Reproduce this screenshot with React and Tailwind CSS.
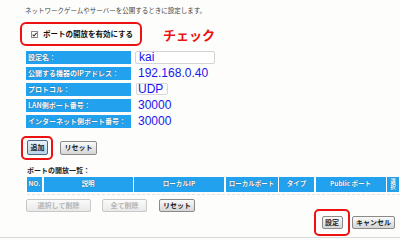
import React from "react";

const jp = "font-['Noto_Sans_CJK_JP','Noto_Sans',sans-serif]";
const num = "font-['Liberation_Sans','Noto_Sans_CJK_JP',sans-serif]";

const rows = [
  { label: "設定名：", value: "kai", kind: "input" },
  { label: "公開する機器のIPアドレス：", value: "192.168.0.40", kind: "text" },
  { label: "プロトコル：", value: "UDP", kind: "select" },
  { label: "LAN側ポート番号：", value: "30000", kind: "text" },
  { label: "インターネット側ポート番号：", value: "30000", kind: "text" },
];

const Btn = ({ children, className = "", disabled = false, active = false }) => (
  <button
    className={`h-[13px] flex items-center justify-center rounded-[2px] border text-[7px] font-bold leading-none ${jp} ${
      disabled
        ? "border-[#c8c8c8] bg-gradient-to-b from-[#fbfbfb] to-[#e9e9e9] text-[#b5b5b5]"
        : active
        ? "border-[#4a6a88] bg-gradient-to-b from-[#e8f2fb] to-[#b9d2e6] text-[#222]"
        : "border-[#8a8a8a] bg-gradient-to-b from-[#fafafa] to-[#d6d6d6] text-[#222]"
    } ${className}`}
  >
    {children}
  </button>
);

export default function App() {
  return (
    <div className={`w-[400px] h-[240px] bg-[#fdfdfb] overflow-hidden flex flex-col ${jp}`}>
      {/* intro */}
      <p className="ml-[25px] mt-[6px] text-[6.5px] leading-[8px] text-[#444]">
        ネットワークゲームやサーバーを公開するときに設定します。
      </p>

      {/* enable checkbox */}
      <div className="flex items-center mt-[8px]">
        <div className="ml-[20px] w-[122px] h-[24px] border-2 border-[#ee1111] rounded-[6px] flex items-center pl-[9px]">
          <svg width="7" height="7" viewBox="0 0 7 7" className="shrink-0">
            <rect x="0.5" y="0.5" width="6" height="6" fill="#fff" stroke="#8a8a8a" />
            <path d="M1.6 3.6 L3 5 L5.6 1.8" fill="none" stroke="#333" strokeWidth="1.1" />
          </svg>
          <span className="ml-[5px] text-[7.5px] font-bold text-[#111] whitespace-nowrap">
            ポートの開放を有効にする
          </span>
        </div>
        <span className="ml-[21px] text-[13px] font-bold text-[#ee1111] leading-none">チェック</span>
      </div>

      {/* settings rows */}
      <div className="ml-[26px] mt-[5px] flex flex-col gap-[3.5px]">
        {rows.map((r) => (
          <div key={r.label} className="flex items-center h-[12.5px]">
            <div className="w-[105px] h-[12.5px] bg-[#22a2ee] flex items-center pl-[2px] text-[7px] font-bold text-white whitespace-nowrap [text-shadow:0_0_1px_#1a3a5a]">
              {r.label}
            </div>
            {r.kind === "input" && (
              <div className="ml-[4px] w-[80px] h-[13px] border border-[#d4d4d4] rounded-[2px] bg-white flex items-center pl-[3px]">
                <span className={`${num} text-[12px] leading-none text-[#1616f0]`}>{r.value}</span>
              </div>
            )}
            {r.kind === "text" && (
              <span className={`ml-[7px] ${num} text-[12px] leading-none text-[#1616f0]`}>{r.value}</span>
            )}
            {r.kind === "select" && (
              <div className="ml-[5px] w-[32px] h-[12px] border border-[#d8d8d8] rounded-[2px] flex items-center pl-[1px]">
                <span className={`${num} text-[12px] leading-none text-[#1616f0]`}>{r.value}</span>
                <svg width="5" height="3" viewBox="0 0 5 3" className="ml-[3px]">
                  <path d="M0 0 H5 L2.5 3 Z" fill="#222" />
                </svg>
              </div>
            )}
          </div>
        ))}
      </div>

      {/* add / reset */}
      <div className="flex items-center mt-[8px]">
        <div className="ml-[21px] w-[32px] h-[24px] border-2 border-[#ee1111] rounded-[5px] flex items-center pl-[4px]">
          <Btn active className="w-[21px] h-[15px]">追加</Btn>
        </div>
        <Btn className="ml-[7px] w-[37px] h-[14px]">リセット</Btn>
      </div>

      <p className="ml-[27px] mt-[5px] text-[7px] font-bold text-[#222] leading-[10px]">ポートの開放一覧：</p>

      {/* table header */}
      <div className="ml-[27px] mt-[2px] flex h-[15px] gap-[1.5px] text-[6.5px] font-bold text-white [text-shadow:0_0_1px_#1a3a5a]">
        <div className="w-[15px] bg-[#22a2ee] flex items-center justify-center">NO.</div>
        <div className="w-[89px] bg-[#22a2ee] flex items-center justify-center">説明</div>
        <div className="w-[90px] bg-[#22a2ee] flex items-center justify-center">ローカルIP</div>
        <div className="w-[52px] bg-[#22a2ee] flex items-center justify-center">ローカルポート</div>
        <div className="w-[35px] bg-[#22a2ee] flex items-center justify-center">タイプ</div>
        <div className="w-[70px] bg-[#22a2ee] flex items-center justify-center">Public ポート</div>
        <div className="w-[12px] bg-[#22a2ee] flex items-center justify-center">
          <span className="w-[6px] text-[5.5px] leading-[6.5px] break-all text-center">選択</span>
        </div>
      </div>
      <div className="ml-[27px] h-[2px] mt-[1px] border-b border-dashed border-[#e4e4e4]" />

      {/* delete buttons */}
      <div className="flex items-center mt-[4px]">
        <Btn disabled className="ml-[26px] w-[65px]">選択して削除</Btn>
        <Btn disabled className="ml-[11px] w-[45px]">全て削除</Btn>
        <Btn className="ml-[12px] w-[36px]">リセット</Btn>
      </div>

      {/* submit */}
      <div className="flex items-center justify-end mr-[5px] mt-[-3px]">
        <div className="w-[36px] h-[27px] border-2 border-[#ee1111] rounded-[5px] flex items-center justify-center">
          <Btn className="w-[21px] h-[12px]">設定</Btn>
        </div>
        <Btn className="ml-[2px] w-[43px] h-[12px]">キャンセル</Btn>
      </div>

      <div className="mt-[1px] h-px bg-[#d8d8d8]" />
    </div>
  );
}
